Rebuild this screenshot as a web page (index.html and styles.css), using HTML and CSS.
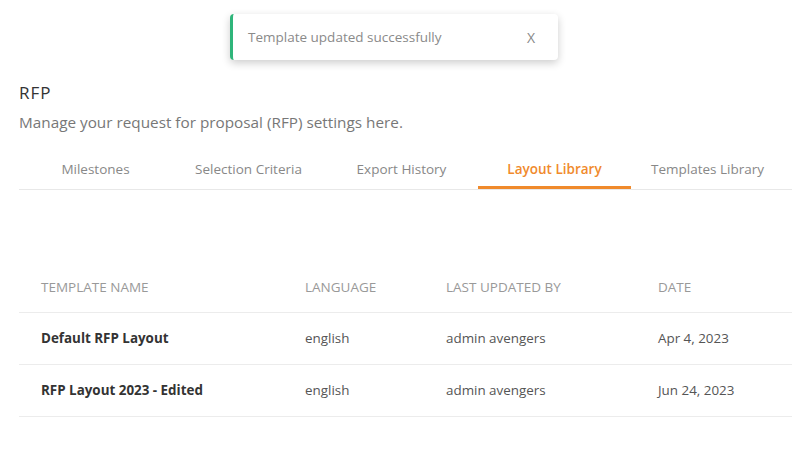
FILE: index.html
```html
<!DOCTYPE html>
<html lang="en">
<head>
<meta charset="utf-8">
<link rel="stylesheet" href="styles.css">
</head>
<body>
<div class="toast">
  <span class="toast-text">Template updated successfully</span>
  <span class="toast-close">X</span>
</div>
<main class="page">
  <h1 class="title">RFP</h1>
  <p class="subtitle">Manage your request for proposal (RFP) settings here.</p>
  <nav class="tabs">
    <div class="tab">Milestones</div>
    <div class="tab">Selection Criteria</div>
    <div class="tab">Export History</div>
    <div class="tab active">Layout Library</div>
    <div class="tab">Templates Library</div>
  </nav>
  <table class="table">
    <thead>
      <tr>
        <th class="c1">Template Name</th>
        <th class="c2">Language</th>
        <th class="c3">Last Updated By</th>
        <th class="c4">Date</th>
      </tr>
    </thead>
    <tbody>
      <tr>
        <td class="name">Default RFP Layout</td>
        <td>english</td>
        <td>admin avengers</td>
        <td>Apr 4, 2023</td>
      </tr>
      <tr>
        <td class="name">RFP Layout 2023 - Edited</td>
        <td>english</td>
        <td>admin avengers</td>
        <td>Jun 24, 2023</td>
      </tr>
    </tbody>
  </table>
</main>
</body>
</html>
```
FILE: styles.css
```css
* { box-sizing: border-box; }
html, body { margin: 0; padding: 0; background: #fff; }
body { font-family: "Open Sans", "Liberation Sans", sans-serif; color: #333; width: 792px; height: 454px; overflow: hidden; position: relative; }

.toast {
  position: absolute;
  left: 230px;
  top: 14px;
  width: 328px;
  height: 46px;
  background: #fff;
  border-left: 3px solid #2fb57a;
  border-radius: 4px;
  box-shadow: 0 3px 9px rgba(0,0,0,0.2);
  display: flex;
  align-items: center;
  justify-content: space-between;
  padding: 0 23px 0 15px;
  font-size: 13.5px;
  color: #8a8a8a;
}
.toast-close { font-size: 14px; color: #888; }

.page { padding: 80px 0 0 19px; }
.title { margin: 0; font-size: 17px; letter-spacing: 1px; font-weight: 400; color: #333; line-height: 26px; }
.subtitle { margin: 4px 0 0; font-size: 15.3px; color: #777; line-height: 24px; }

.tabs { display: flex; margin-top: 18px; border-bottom: 1px solid #e8e8e8; height: 38px; }
.tab { width: 153px; text-align: center; font-size: 13.5px; color: #888; line-height: 35px; border-bottom: 3px solid transparent; }
.tab.active { color: #f08a2c; font-weight: 600; border-bottom-color: #f08a2c; }

.table { margin-top: 72px; width: 773px; border-collapse: collapse; font-size: 13.4px; }
.table th, .table td { text-align: left; padding: 0 0 0 22px; border-bottom: 1px solid #ececec; }
.table th { font-weight: 400; text-transform: uppercase; color: #999; height: 50px; font-size: 13.5px; }
.table td { height: 52px; color: #555; }
.table td.name { font-weight: 700; color: #333; }
.c1 { width: 264px; }
.c2 { width: 141px; }
.c3 { width: 212px; }
.c4 { width: 156px; }
```
